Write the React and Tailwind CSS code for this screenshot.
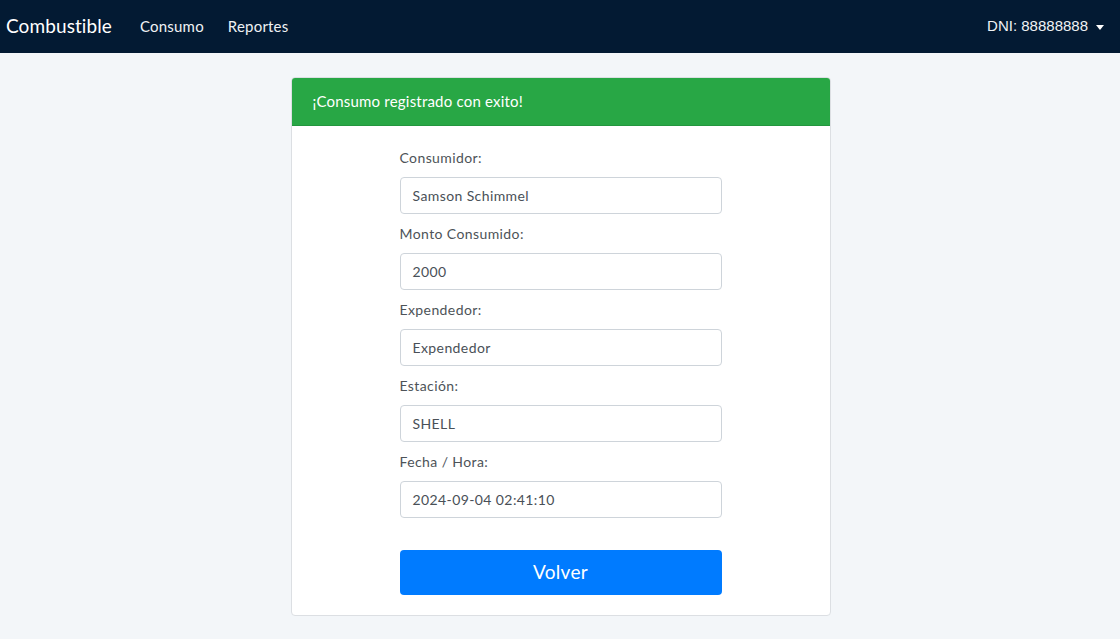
export default function App() {
  const fields = [
    ["Consumidor:", "Samson Schimmel"],
    ["Monto Consumido:", "2000"],
    ["Expendedor:", "Expendedor"],
    ["Estación:", "SHELL"],
    ["Fecha / Hora:", "2024-09-04 02:41:10"],
  ];
  return (
    <div className="min-h-[639px] bg-[#f3f6f9] font-['Lato','Open_Sans',sans-serif]">
      <nav className="h-[53px] bg-[#031a33] flex items-center pl-[6px] pr-[16px] text-white">
        <span className="text-[19px] mr-[28px] tracking-[0.1px]">Combustible</span>
        <span className="text-[15px] text-[#f0f2f5] mr-[24px] tracking-[0.2px]">Consumo</span>
        <span className="text-[15px] text-[#f0f2f5] tracking-[0.2px]">Reportes</span>
        <div className="ml-auto flex items-center text-[15px] font-['Liberation_Sans',sans-serif] text-[#f0f2f5]">
          DNI: 88888888
          <span className="ml-[8px] w-0 h-0 border-l-[4px] border-r-[4px] border-t-[5px] border-l-transparent border-r-transparent border-t-white mt-[1px]"></span>
        </div>
      </nav>
      <div className="flex justify-center pt-[24px] pl-[1px]">
        <div className="w-[540px] bg-white border border-[#dcdfe3] rounded-[4px] overflow-hidden">
          <div className="h-[48px] bg-[#28a745] flex items-center px-[21px] text-white text-[15px] tracking-[0.2px] border-b border-[#23963e]">
            ¡Consumo registrado con exito!
          </div>
          <div className="flex justify-center pt-[20px] pb-[20px]">
            <div className="w-[322px] flex flex-col">
              {fields.map(([l, v]) => (
                <div key={l} className="flex flex-col">
                  <label className="text-[14px] text-[#4d5358] h-[22px] pt-[2px] leading-[20px] mb-[9px] tracking-[0.4px]">{l}</label>
                  <div className="h-[37px] border border-[#ced4da] rounded-[4px] flex items-center px-[12px] text-[14px] text-[#495057] mb-[8px] tracking-[0.4px]">
                    {v}
                  </div>
                </div>
              ))}
              <button className="mt-[24px] h-[45px] bg-[#007bff] text-white text-[19px] rounded-[4px] tracking-[0.3px]">Volver</button>
            </div>
          </div>
        </div>
      </div>
    </div>
  );
}
